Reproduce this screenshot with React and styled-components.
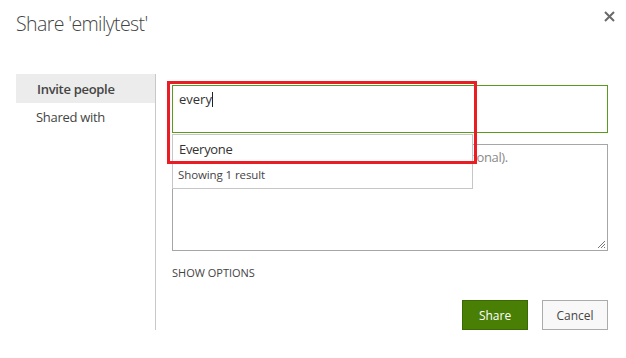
import React from "react";
import styled, { createGlobalStyle } from "styled-components";

const Global = createGlobalStyle`
  html, body { margin: 0; padding: 0; background: #fff; }
  body { font-family: "Open Sans", "Noto Sans", sans-serif; color: #444; }
  * { box-sizing: border-box; }
`;

const Page = styled.div`
  width: 626px;
  height: 358px;
  padding: 0 18px 0 16px;
  background: #fff;
`;

const Header = styled.div`
  display: flex;
  justify-content: space-between;
  align-items: flex-start;
  height: 74px;
  padding-top: 10px;
`;

const Title = styled.h1`
  margin: 0;
  font-size: 19.5px;
  font-weight: 300;
  line-height: 28px;
  color: #444;
  letter-spacing: -0.6px;
`;

const Close = styled.button`
  border: 0;
  background: none;
  padding: 0;
  margin: 1px -7px 0 0;
  width: 11px;
  height: 11px;
  display: flex;
  cursor: pointer;
`;

const Body = styled.div`
  display: flex;
`;

const Nav = styled.nav`
  width: 140px;
  border-right: 1px solid #c8c8c8;
  display: flex;
  flex-direction: column;
`;

const NavItem = styled.div`
  height: ${(p) => (p.$active ? 29 : 28)}px;
  display: flex;
  align-items: center;
  padding-left: ${(p) => (p.$active ? 21 : 20)}px;
  font-size: 13px;
  font-weight: ${(p) => (p.$active ? 600 : 400)};
  background: ${(p) => (p.$active ? "#ececec" : "transparent")};
  color: #444;
  letter-spacing: -0.3px;
`;

const Content = styled.div`
  padding: 11px 0 0 16px;
  width: 452px;
  display: flex;
  flex-direction: column;
`;

const InputWrap = styled.div`
  position: relative;
`;

const PeopleInput = styled.div`
  height: 48px;
  border: 1px solid #5a9a1c;
  padding: 4px 6px;
  font-size: 13px;
  line-height: 18px;
  color: #333;
  display: flex;
  align-items: flex-start;
`;

const Caret = styled.span`
  display: inline-block;
  width: 1px;
  height: 15px;
  background: #222;
  margin-top: 2px;
`;

const Dropdown = styled.div`
  position: absolute;
  top: 49px;
  left: 0;
  width: 301px;
  border: 1px solid #c6c6c6;
  background: #fff;
  z-index: 2;
`;

const Suggestion = styled.div`
  height: 28px;
  display: flex;
  align-items: center;
  padding-left: 6px;
  font-size: 13px;
  color: #333;
  letter-spacing: -0.3px;
`;

const ResultCount = styled.div`
  height: 25px;
  display: flex;
  align-items: center;
  padding: 0 0 3px 5px;
  font-size: 11.5px;
  color: #444;
  letter-spacing: -0.1px;
`;

const Highlight = styled.div`
  position: absolute;
  left: -5px;
  top: -4px;
  width: 310px;
  height: 83px;
  border: 3px solid #ea1c24;
  z-index: 3;
  pointer-events: none;
`;

const Message = styled.div`
  position: relative;
  margin-top: 11px;
  height: 107px;
  border: 1px solid #a6a6a6;
  padding: 3px 6px;
  font-size: 13px;
  line-height: 18px;
  color: #8a8a8a;
  letter-spacing: -0.35px;
`;

const Grip = styled.svg`
  position: absolute;
  right: 1px;
  bottom: 1px;
`;

const OptionsLink = styled.div`
  margin-top: 15px;
  font-size: 11px;
  line-height: 14px;
  text-transform: uppercase;
  color: #444;
`;

const Actions = styled.div`
  display: flex;
  justify-content: flex-end;
  gap: 14px;
  margin-top: 20px;
`;

const Button = styled.button`
  width: 66px;
  height: 30px;
  font-family: inherit;
  font-size: 12px;
  padding: 0;
  border: 1px solid ${(p) => (p.$primary ? "#3b6a04" : "#ababab")};
  background: ${(p) => (p.$primary ? "#4a7f06" : "#f8f8f8")};
  color: ${(p) => (p.$primary ? "#fff" : "#444")};
  cursor: pointer;
`;

export default function App() {
  return (
    <Page>
      <Global />
      <Header>
        <Title>Share 'emilytest'</Title>
        <Close aria-label="Close">
          <svg width="11" height="11" viewBox="0 0 11 11">
            <path d="M1 1 L10 10 M10 1 L1 10" stroke="#6a6a6a" strokeWidth="2" />
          </svg>
        </Close>
      </Header>
      <Body>
        <Nav>
          <NavItem $active>Invite people</NavItem>
          <NavItem>Shared with</NavItem>
        </Nav>
        <Content>
          <InputWrap>
            <PeopleInput>
              every<Caret />
            </PeopleInput>
            <Dropdown>
              <Suggestion>Everyone</Suggestion>
              <ResultCount>Showing 1 result</ResultCount>
            </Dropdown>
            <Highlight />
          </InputWrap>
          <Message>
            Include a personal message with this invitation (Optional).
            <Grip width="10" height="10" viewBox="0 0 10 10">
              <path d="M9 2 L2 9 M9 5 L5 9 M9 8 L8 9" stroke="#777" strokeWidth="1" />
            </Grip>
          </Message>
          <OptionsLink>Show options</OptionsLink>
          <Actions>
            <Button $primary>Share</Button>
            <Button>Cancel</Button>
          </Actions>
        </Content>
      </Body>
    </Page>
  );
}
